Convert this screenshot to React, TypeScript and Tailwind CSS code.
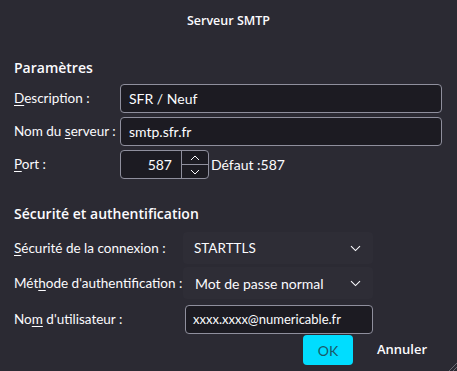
import React from "react";

const headFont = { fontFamily: '"Open Sans", "Noto Sans", sans-serif' };

const Chevron = () => (
  <svg width="11" height="7" viewBox="0 0 11 7" fill="none" stroke="#fbfbfe" strokeWidth="1.1">
    <path d="M1 1.2 L5.5 5.6 L10 1.2" />
  </svg>
);

const Label = ({ pre, k, post }: { pre: string; k: string; post: string }) => (
  <span>
    {pre}
    <span className="underline underline-offset-2">{k}</span>
    {post}
  </span>
);

const App: React.FC = () => {
  return (
    <div
      className="relative flex h-[371px] w-[457px] flex-col bg-[#2b2a33] text-[13.5px] text-[#fbfbfe]"
      style={{ fontFamily: 'Lato, "Noto Sans", sans-serif' }}
    >
      <div className="flex h-[42px] items-center justify-center text-[12.5px] font-semibold" style={headFont}>
        Serveur SMTP
      </div>

      <div className="flex flex-col pl-[14px] pr-[15px]">
        <h2 className="mt-[16px] mb-[6px] text-[14px] leading-[20px] font-semibold" style={headFont}>
          Paramètres
        </h2>

        <div className="flex flex-col gap-[4px]">
          <div className="flex items-center">
            <div className="w-[106px]">
              <Label pre="" k="D" post="escription :" />
            </div>
            <div className="flex h-[29px] flex-1 items-center rounded-[4px] border border-[#8f8f9d] bg-[#1c1b22] px-[8px] text-[14px]">
              SFR / Neuf
            </div>
          </div>
          <div className="flex items-center">
            <div className="w-[106px] whitespace-nowrap">
              <Label pre="Nom du " k="s" post="erveur :" />
            </div>
            <div className="flex h-[29px] flex-1 items-center rounded-[4px] border border-[#8f8f9d] bg-[#1c1b22] px-[8px] text-[14px]">
              smtp.sfr.fr
            </div>
          </div>
          <div className="flex items-center">
            <div className="w-[106px]">
              <Label pre="" k="P" post="ort :" />
            </div>
            <div className="flex h-[29px] w-[89px] items-center rounded-[4px] border border-[#8f8f9d] bg-[#1c1b22] text-[14px]">
              <div className="flex-1 pr-[9px] text-right">587</div>
              <div className="flex h-full w-[27px] flex-col border-l border-[#8f8f9d]">
                <div className="flex flex-1 items-center justify-center border-b border-[#8f8f9d]">
                  <svg width="10" height="6" viewBox="0 0 10 6" fill="none" stroke="#fbfbfe" strokeWidth="1">
                    <path d="M1 5 L5 1 L9 5" />
                  </svg>
                </div>
                <div className="flex flex-1 items-center justify-center">
                  <svg width="10" height="6" viewBox="0 0 10 6" fill="none" stroke="#fbfbfe" strokeWidth="1">
                    <path d="M1 1 L5 5 L9 1" />
                  </svg>
                </div>
              </div>
            </div>
            <span className="ml-[2px] text-[14px]">Défaut :587</span>
          </div>
        </div>

        <h2 className="mt-[25px] mb-[8px] text-[14px] leading-[20px] font-semibold" style={headFont}>
          Sécurité et authentification
        </h2>

        <div className="flex flex-col gap-[3px]">
          <div className="flex items-center">
            <div className="w-[169px] whitespace-nowrap">
              <Label pre="" k="S" post="écurité de la connexion :" />
            </div>
            <div className="flex h-[32px] w-[190px] items-center justify-between rounded-[4px] bg-[#2e2d36] pr-[12px] pl-[11px]">
              <span>STARTTLS</span>
              <Chevron />
            </div>
          </div>
          <div className="flex items-center">
            <div className="w-[169px] whitespace-nowrap">
              <Label pre="Mét" k="h" post="ode d'authentification :" />
            </div>
            <div className="flex h-[32px] w-[190px] items-center justify-between rounded-[4px] bg-[#2e2d36] pr-[12px] pl-[12px] text-[14px]">
              <span>Mot de passe normal</span>
              <Chevron />
            </div>
          </div>
          <div className="mt-[3px] flex items-center">
            <div className="w-[171px] whitespace-nowrap">
              <Label pre="No" k="m" post=" d'utilisateur :" />
            </div>
            <div className="flex h-[29px] w-[188px] items-center rounded-[4px] border border-[#8f8f9d] bg-[#1c1b22] px-[7px] text-[13px]">
              xxxx.xxxx@numericable.fr
            </div>
          </div>
        </div>

        <div className="mt-[1px] flex items-center justify-end gap-[14px] pr-[5px]">
          <button className="h-[30px] w-[50px] rounded-[4px] bg-[#00ddff] text-[14px] text-[#1a5a68]">OK</button>
          <button className="h-[30px] w-[70px] rounded-[4px] text-[13px] font-semibold" style={headFont}>
            Annuler
          </button>
        </div>
      </div>

      <svg className="absolute right-0 bottom-0" width="10" height="10" viewBox="0 0 10 10" stroke="#6b6a73" strokeWidth="1">
        <path d="M10 2 L2 10 M10 6 L6 10" />
      </svg>
    </div>
  );
};

export default App;
